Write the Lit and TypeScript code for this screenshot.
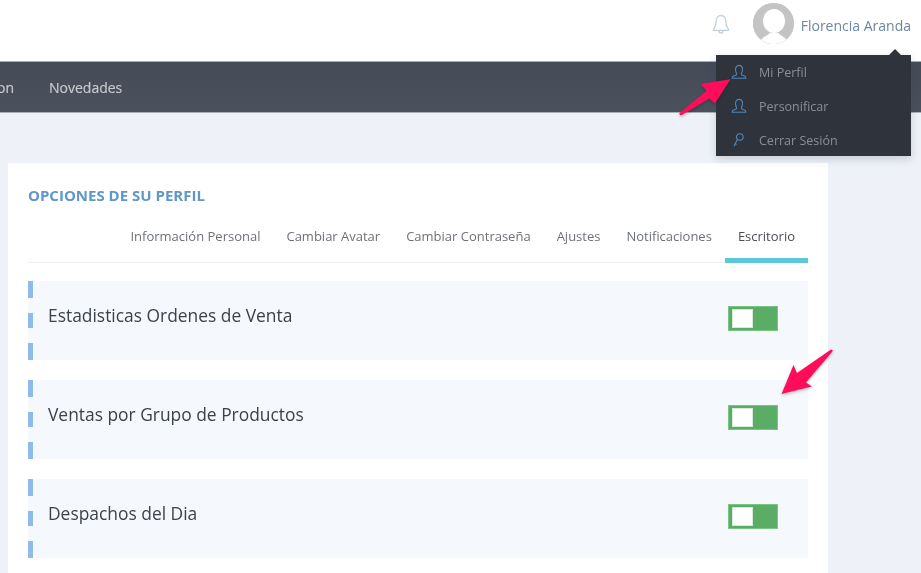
import { LitElement, html, css, svg } from "lit";
import { customElement } from "lit/decorators.js";

const userIcon = html`<svg class="mi" width="16" height="16" viewBox="0 0 16 16" fill="none" stroke="#4f86b8" stroke-width="1.1"><path d="M5.6 9.6c-.3-.7-1.1-2-1.1-4.100C4.500 3 6 1.400 8 1.400S11.500 3 11.500 5.500c0 2.100-.8 3.400-1.100 4.100-.2.600.1 1.100.6 1.400l2.800 1.300c.7.300 1 .8 1 1.600v.4H1.200v-.4c0-.8.3-1.300 1-1.600L5 11c.5-.3.8-.8.600-1.400z"/></svg>`;
const keyIcon = html`<svg class="mi" width="16" height="16" viewBox="0 0 16 16" fill="none" stroke="#4f86b8" stroke-width="1.1"><circle cx="8.800" cy="5" r="3.300"/><path d="M6.500 7.500 3 13.800M4.200 11.500l1.300 1M3.200 13.200l1 .8"/></svg>`;

const tabs = ["Información Personal", "Cambiar Avatar", "Cambiar Contraseña", "Ajustes", "Notificaciones", "Escritorio"];
const rows = ["Estadisticas Ordenes de Venta", "Ventas por Grupo de Productos", "Despachos del Dia"];

@customElement("app-root")
export class AppRoot extends LitElement {
  static styles = css`
    :host { display: block; width: 921px; height: 573px; overflow: hidden; position: relative; background: #eef1f7; font-family: "Open Sans", sans-serif; filter: blur(0.35px); }
    .top { height: 61px; padding: 3px 10px 0 0; background: #fff; display: flex; align-items: flex-start; justify-content: flex-end; box-sizing: border-box; }
    .bell { margin: 11px 22px 0 0; display: block; }
    .avatar { width: 41px; height: 41px; border-radius: 50%; background: #c4c4c4; overflow: hidden; margin-right: 7px; display: block; }
    .uname { font-size: 14px; line-height: 19px; color: #6b87a3; margin-top: 13px; }
    .nav { height: 52px; background: linear-gradient(#454b57, #4a505c); border-top: 1px solid #a9adb4; border-bottom: 1px solid #a9adb4; box-sizing: border-box; display: flex; align-items: center; gap: 35px; color: #c6c9ce; font-size: 14px; overflow: hidden; -webkit-text-stroke: 0.2px #c6c9ce; }
    .nav span:first-child { margin-left: -3px; }
    .card { width: 820px; margin: 50px 0 0 8px; background: #fff; padding: 23px 20px 0; box-sizing: border-box; height: 410px; }
    h2 { margin: 0; font-size: 15px; line-height: 19px; font-weight: 700; color: #5f97c8; }
    .tabs { display: flex; justify-content: flex-end; height: 52px; margin-top: 6px; margin-bottom: 18px; border-bottom: 1px solid #eef0f3; box-sizing: border-box; }
    .tab { font-size: 13px; line-height: 18px; color: #6d7278; padding: 16px 13px 0; box-sizing: border-box; height: 52px; white-space: nowrap; }
    .tab.active { color: #4a4f55; border-bottom: 5px solid #5cc8da; }
    .row { height: 79px; background: #f5f8fd; margin-bottom: 20px; display: flex; position: relative; }
    .bar { width: 5px; display: flex; flex-direction: column; justify-content: space-between; }
    .bar i { display: block; background: #8fbbec; height: 17px; }
    .bar i:nth-child(2) { height: 15px; margin-top: -1px; }
    .label { font-size: 17.400px; color: #3d4247; margin: 21px 0 0 15px; line-height: 26px; flex: 1; }
    .toggle { width: 50px; height: 25px; background: #5bad66; border: 1px solid #7cc486; box-sizing: border-box; margin: 25px 30px 0 0; padding: 2px 3px; }
    .toggle b { display: block; width: 21px; height: 19px; background: #fff; border: 1px solid #d6ead9; box-sizing: border-box; }
    .menu { position: absolute; left: 716px; top: 55px; width: 195px; height: 101px; background: #2f343c; box-shadow: 0 3px 8px rgba(60,70,90,.22); box-sizing: border-box; }
    .menu::before { content: ""; position: absolute; right: 10px; top: -6px; border: 6px solid transparent; border-top: 0; border-bottom-color: #2f343c; }
    .mrow { height: 34px; display: flex; align-items: center; padding-left: 15px; font-size: 12.500px; color: #87909a; }
    .mi { margin-right: 12px; flex: none; }
    .arrow { position: absolute; left: 0; top: 0; pointer-events: none; }
  `;

  render() {
    return html`
      <div class="top">
        <svg class="bell" width="20" height="22" viewBox="0 0 20 22" fill="none" stroke="#c3d0da" stroke-width="1.300"><path d="M10 1.500c-3.100 0-4.800 2.500-4.800 5.600 0 3.800-.9 6-2.600 8v1.300h14.800v-1.300c-1.700-2-2.600-4.200-2.600-8 0-3.100-1.700-5.600-4.800-5.600z"/><path d="M7.800 16.600c.2 1.500 1.100 2.300 2.200 2.300s2-.8 2.200-2.300"/></svg>
        <svg class="avatar" viewBox="0 0 41 41"><rect width="41" height="41" fill="#c4c4c4"/><ellipse cx="21" cy="18" rx="11" ry="12" fill="#fff"/><path d="M6 41c1-6 8-8 11-11h8c3 3 10 5 11 11z" fill="#fff"/></svg>
        <div class="uname">Florencia Aranda</div>
      </div>
      <div class="nav"><span>on</span><span>Novedades</span></div>
      <div class="card">
        <h2>OPCIONES DE SU PERFIL</h2>
        <div class="tabs">${tabs.map((t) => html`<div class="tab ${t === "Escritorio" ? "active" : ""}">${t}</div>`)}</div>
        ${rows.map((r) => html`<div class="row">
          <div class="bar"><i></i><i></i><i></i></div>
          <div class="label">${r}</div>
          <div class="toggle"><b></b></div>
        </div>`)}
      </div>
      <div class="menu">
        <div class="mrow">${userIcon}Mi Perfil</div>
        <div class="mrow">${userIcon}Personificar</div>
        <div class="mrow">${keyIcon}Cerrar Sesión</div>
      </div>
      <svg class="arrow" width="921" height="573" viewBox="0 0 921 573">
        <defs><filter id="s" x="-30%" y="-30%" width="160%" height="160%"><feDropShadow dx="0" dy="1.500" stdDeviation="1.500" flood-color="#000" flood-opacity=".25"/></filter></defs>
        ${svg`<path filter="url(#s)" fill="#ff0f5a" d="M730.500 79.300 L700.700 84 L706.700 90.700 L679.300 113.300 L680 115.300 L682 115 L709.300 98.300 L715 103.300 Z"/>`}
        ${svg`<path filter="url(#s)" fill="#ff0f5a" d="M781.500 394 L793.500 365 L797 373 L831 349.500 L833 350.500 L832 352 L806 382.500 L812 386.500 Z"/>`}
      </svg>
    `;
  }
}
